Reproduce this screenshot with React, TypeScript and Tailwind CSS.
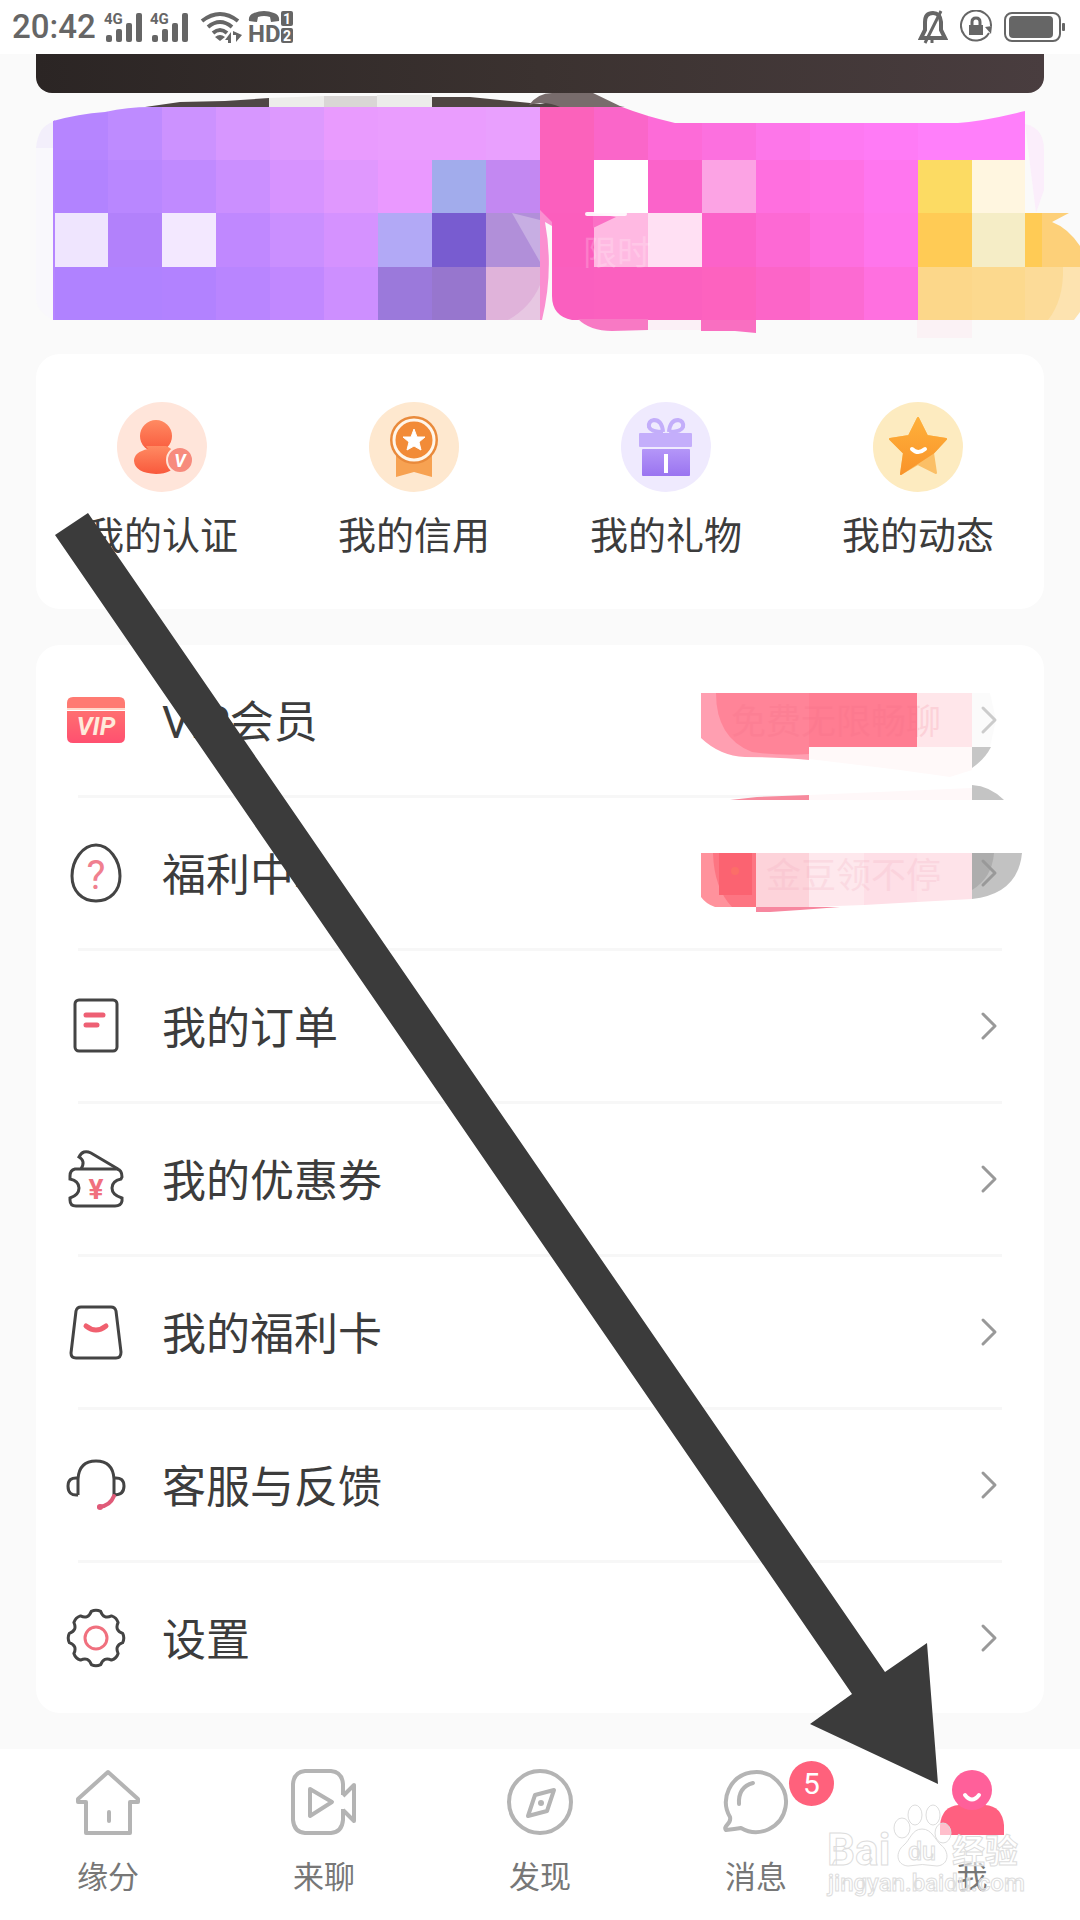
import type { ReactNode } from "react";

const purpleTiles = [
  ["#b685ff", "#be8bff", "#cc92ff", "#d797ff", "#dd99fe", "#e99bfe", "#ea9dfe", "#ea9dfe", "#e9a0fe"],
  ["#b283ff", "#b987ff", "#c08aff", "#cb8fff", "#d793ff", "#e098fe", "#ea99ff", "#a2acec", "#c388f2"],
  ["#efe5fe", "#b281fb", "#f3e8ff", "#c088ff", "#ca8fff", "#d592ff", "#b2a9f6", "#785cd0", "#b18fd9"],
  ["#b082ff", "#b082ff", "#b282ff", "#b985ff", "#c188ff", "#cd8fff", "#9b79db", "#9776ce", "#e0b3da"],
];

const pinkTiles = [
  ["#fb62bb", "#fa66c9", "#fd6bd8", "#fc70df", "#fd76e9", "#fe79f2", "#ff7bf6", "#ff7ffa", "#ff7ffa"],
  ["#fb5fbe", "#ffffff", "#fb63ca", "#fca3e4", "#ff6fdf", "#ff71e4", "#ff76ef", "#fcdb63", "#fff6e0"],
  ["#fb5ebd", "#ffb9e2", "#ffe0f3", "#fc62c9", "#fd69d4", "#fe6fe0", "#ff75ec", "#ffcb55", "#f5edc6"],
  ["#fa5fbf", "#fb60bf", "#fb60bf", "#fd62bf", "#fc65c8", "#fc6ad2", "#ff70e0", "#fcd78a", "#fcd98e"],
];

const rowY = [107, 160, 213, 267, 320];

function Tiles(props: { tiles: string[][]; x: number }) {
  return (
    <g shapeRendering="crispEdges">
      {props.tiles.map((row, r) =>
        row.map((fill, c) => (
          <rect
            key={`${r}-${c}`}
            x={props.x + c * 54}
            y={r === 0 ? 93 : rowY[r]}
            width={54}
            height={rowY[r + 1] - (r === 0 ? 93 : rowY[r])}
            fill={fill}
          />
        ))
      )}
    </g>
  );
}

function Banner() {
  return (
    <svg viewBox="0 93 1080 261" className="block w-full" aria-hidden="true">
      <defs>
        <clipPath id="purple-edge">
          <path d="M53 121Q78 114 105 112Q128 107 150 107H540V320H53Z" />
        </clipPath>
        <clipPath id="pink-edge">
          <path d="M540 107H622Q645 116 675 123H958Q985 121 1025 111V320H572Q552 316 552 296V222L540 210Z" />
        </clipPath>
      </defs>
      <path d="M36 148Q38 126 53 122V148Z" fill="#f3effb" />
      <path d="M36 148H53V320Q38 312 36 300Z" fill="#f9f8fc" />
      <path d="M1025 124Q1044 128 1044 150V190L1036 213Z" fill="#fbeefb" />
      <path d="M145 107L180 102L225 101L269 98V107Z" fill="#4f4746" />
      <path d="M269 98L324 96V107H269Z" fill="#ececea" />
      <path d="M324 96H377V107H324Z" fill="#d9d6d5" />
      <path d="M377 95H432V107H377Z" fill="#ececea" />
      <path d="M432 97L470 97L510 101L540 104L560 100L625 107H432Z" fill="#4f4643" />
      <path d="M529 105Q538 93 552 93H593L622 107H560Q545 100 529 105Z" fill="#786c6c" />
      <g clipPath="url(#purple-edge)">
        <Tiles tiles={purpleTiles} x={54} />
        <rect x="52" y="107" width="3" height="213" fill="#b685ff" />
        <path d="M512 213L540 220V262Z" fill="#c7aee3" />
        <path d="M540 285V320H508Q530 308 540 285Z" fill="#e7c7e2" />
      </g>
      <path d="M540 200L552 208V226L545 222Q554 270 542 320H540Z" fill="#fa8fd0" />
      <g clipPath="url(#pink-edge)">
        <Tiles tiles={pinkTiles} x={540} />
        <path d="M593 228L616 217L593 213Z" fill="#fb6fc5" />
      </g>
      <rect x="585" y="212" width="42" height="4" rx="2" fill="#ffffff" opacity="0.9" />
      <text x="583" y="265" fontSize="34" fill="#ffffff" opacity="0.2">
        限时
      </text>
      <path d="M1025 213H1069L1052 222Q1068 228 1080 246V267H1025Z" fill="#fdd079" />
      <path d="M1025 213H1042V267H1025Z" fill="#ffcb55" />
      <path d="M1025 267H1080V312L1074 320H1025Z" fill="#fde3b0" />
      <path d="M1025 267H1063Q1064 300 1048 320H1025Z" fill="#fcdb98" />
      <path d="M578 319Q590 331 612 331L648 330V319Z" fill="#f879c4" />
      <path d="M701 320H756V333L735 331H701Z" fill="#f96fc1" />
      <path d="M648 320H701V330H648Z" fill="#fbf0f6" />
      <path d="M917 320H972V338H917Z" fill="#fbf2f5" />
    </svg>
  );
}

function SignalIcon() {
  return (
    <svg viewBox="0 0 38 32" className="h-8 w-[38px] overflow-visible" fill="#666666">
      <text x="0" y="13" fontSize="15" className="font-[Roboto] font-bold">
        4G
      </text>
      <rect x="2" y="24" width="6" height="7" rx="2" />
      <rect x="12" y="18" width="6" height="13" rx="2" />
      <rect x="22" y="12" width="6" height="19" rx="2" />
      <rect x="32" y="2" width="6" height="29" rx="2" />
    </svg>
  );
}

function StatusBar() {
  return (
    <header className="flex h-[54px] items-center justify-between bg-white pl-3 pr-3.5">
      <div className="flex items-center gap-2">
        <span className="font-[Roboto] text-[33px] leading-10 font-medium text-[#666666]">20:42</span>
        <SignalIcon />
        <SignalIcon />
        <svg viewBox="0 0 44 32" className="ml-1 h-8 w-11" fill="none" stroke="#666666" strokeWidth="4">
          <path d="M2 10Q20 -4 38 10" />
          <path d="M8 16Q20 6 32 16" />
          <path d="M13 22Q20 16 27 22" />
          <path d="M15 26Q20 22 25 26L20 30Z" fill="#666666" stroke="none" />
          <path d="M25 29L31 21V32H28V29ZM33 20L42 24L36 31V24H33Z" fill="#666666" stroke="none" />
        </svg>
        <svg viewBox="0 0 46 34" className="-ml-1 h-[34px] w-[46px] overflow-visible" fill="#666666">
          <path d="M1 11Q0 5 6 3Q16 -1 26 3Q32 5 31 11L23 12L22 7Q16 5 10 7L9 12Z" />
          <text x="0" y="32" fontSize="24" className="font-[Roboto] font-bold">
            HD
          </text>
          <rect x="33" y="1" width="12" height="15" rx="2" />
          <rect x="33" y="18" width="12" height="15" rx="2" />
          <text x="39" y="14" fontSize="14" textAnchor="middle" fill="#ffffff" className="font-[Roboto] font-bold">
            1
          </text>
          <text x="39" y="31" fontSize="14" textAnchor="middle" fill="#ffffff" className="font-[Roboto] font-bold">
            2
          </text>
        </svg>
      </div>
      <div className="flex items-center gap-3">
        <svg viewBox="0 0 30 34" className="h-[34px] w-[30px]" fill="none" stroke="#666666" strokeWidth="4">
          <path d="M3 28H27L23 20V12Q22 3 15 3Q7 3 7 12V20Z" />
          <path d="M23 1L7 33M14 29V33" strokeWidth="3" />
        </svg>
        <svg viewBox="0 0 32 34" className="h-[34px] w-8" fill="none" stroke="#666666" strokeWidth="2">
          <path d="M29 23A15 15 0 1 1 31 16" />
          <rect x="9" y="15" width="14" height="10" fill="#666666" stroke="none" />
          <path d="M12 15V12Q12 8 16 8Q20 8 20 12V15" strokeWidth="3" />
          <path d="M25 17L32 16L31 24Z" fill="#666666" stroke="none" />
        </svg>
        <svg viewBox="0 0 62 34" className="h-[34px] w-[62px]" fill="#666666">
          <rect x="1" y="3" width="55" height="28" rx="7" fill="none" stroke="#666666" strokeWidth="2" />
          <rect x="5" y="6" width="44" height="22" rx="4" />
          <rect x="58" y="13" width="3" height="8" rx="1" />
        </svg>
      </div>
    </header>
  );
}

const shortcuts: { label: string; icon: ReactNode }[] = [
  {
    label: "我的认证",
    icon: (
      <>
        <circle cx="45" cy="45" r="45" fill="#ffe5da" />
        <circle cx="39" cy="34" r="16" fill="url(#orange)" />
        <path d="M29 44H49Q62 50 60 60Q56 72 39 72Q18 71 17 59Q17 50 31 47Z" fill="url(#orange)" />
        <circle cx="63" cy="58" r="13" fill="#f78b7d" stroke="#ffe5da" strokeWidth="2" />
        <text x="63" y="65" fontSize="18" textAnchor="middle" fill="#ffffff" className="font-[Roboto] font-bold italic">
          V
        </text>
      </>
    ),
  },
  {
    label: "我的信用",
    icon: (
      <>
        <circle cx="45" cy="45" r="45" fill="#fee8cf" />
        <path d="M27 52H63V75L45 70L27 75Z" fill="#f7a252" />
        <circle cx="45" cy="38" r="24" fill="#e98a3b" />
        <circle cx="45" cy="38" r="20" fill="#f28b37" stroke="#fff6ea" strokeWidth="3" />
        <path
          d="M45 27L48 35L56 35L50 40L52 48L45 44L38 48L40 40L34 35L42 35Z"
          fill="#ffffff"
          stroke="#ffffff"
          strokeLinejoin="round"
        />
      </>
    ),
  },
  {
    label: "我的礼物",
    icon: (
      <>
        <circle cx="45" cy="45" r="45" fill="#efeafe" />
        <path
          d="M42 30Q41 18 33 18Q27 19 28 25Q30 30 42 30M48 30Q49 18 57 18Q63 19 62 25Q60 30 48 30"
          fill="none"
          stroke="#c3aefa"
          strokeWidth="4"
        />
        <rect x="18" y="31" width="53" height="14" rx="1" fill="#c4aefb" />
        <rect x="21" y="47" width="48" height="27" rx="1" fill="url(#violet)" />
        <path d="M45 52V71" stroke="#ffffff" strokeWidth="4" />
      </>
    ),
  },
  {
    label: "我的动态",
    icon: (
      <>
        <circle cx="45" cy="45" r="45" fill="#fdebc0" />
        <path
          d="M45 16L54 34L73 37L60 51L63 71L45 62L28 72L31 51L17 37L36 34Z"
          fill="#fbbf66"
          stroke="#fbbf66"
          strokeWidth="2"
          strokeLinejoin="round"
        />
        <path
          d="M45 16L54 34L73 37L60 51L28 72L31 51L17 37L36 34Z"
          fill="url(#amber)"
          stroke="url(#amber)"
          strokeWidth="2"
          strokeLinejoin="round"
        />
        <path d="M39 47Q45 53 52 47" fill="none" stroke="#ffffff" strokeWidth="4" strokeLinecap="round" />
      </>
    ),
  },
];

// Eight rounded teeth joined by shallow notches
function gearPath() {
  const at = (radius: number, deg: number) => {
    const a = (deg * Math.PI) / 180;
    return `${(30 + radius * Math.cos(a)).toFixed(1)} ${(30 + radius * Math.sin(a)).toFixed(1)}`;
  };
  let d = `M${at(27, -100)}`;
  for (let k = 0; k < 8; k++) {
    const mid = -90 + k * 45;
    d += `Q${at(29, mid)} ${at(27, mid + 10)}Q${at(20, mid + 22)} ${at(27, mid + 35)}`;
  }
  return d + "Z";
}

const menu: { label: string; icon: ReactNode }[] = [
  {
    label: "VIP会员",
    icon: (
      <>
        <path d="M1 18V13Q1 7 7 7H53Q59 7 59 13V18Z" fill="#ff7a72" stroke="none" />
        <path d="M1 21H59V47Q59 53 53 53H7Q1 53 1 47Z" fill="url(#rose)" stroke="none" />
        <path d="M1 19H59" stroke="#ffd9cc" strokeWidth="2" />
        <text x="30" y="45" fontSize="25" textAnchor="middle" fill="#ffeadb" stroke="none" className="font-[Roboto] font-bold italic">
          VIP
        </text>
      </>
    ),
  },
  {
    label: "福利中心",
    icon: (
      <>
        <path d="M30 2C43 2 54 17 54 33C54 48 44 58 30 58C16 58 6 48 6 33C6 17 17 2 30 2Z" />
        <text x="30" y="46" fontSize="40" textAnchor="middle" fill="#f0808f" stroke="none" className="font-[Roboto] font-normal">
          ?
        </text>
      </>
    ),
  },
  {
    label: "我的订单",
    icon: (
      <>
        <rect x="9" y="4" width="42" height="51" rx="4" />
        <path d="M20 19H37M20 29H31" stroke="#ee6074" strokeWidth="5" strokeLinecap="round" />
      </>
    ),
  },
  {
    label: "我的优惠券",
    icon: (
      <>
        <path d="M9 20H51Q56 21 56 28L55 30Q46 32 46 39Q46 46 56 49V52Q55 57 49 57H10Q4 57 4 51V49Q13 46 13 39Q13 32 4 30V27Q4 21 9 20Z" />
        <path d="M15 20Q20 12 13 8Q17 0 25 4L52 20" />
        <text x="30" y="50" fontSize="28" textAnchor="middle" fill="#f0707e" stroke="none" className="font-[Roboto] font-bold">
          ¥
        </text>
      </>
    ),
  },
  {
    label: "我的福利卡",
    icon: (
      <>
        <path d="M15 5H45Q49 5 50 9L55 50Q55 56 50 56H10Q5 56 5 51L10 9Q11 5 15 5Z" />
        <path d="M20 24Q30 32 40 24" stroke="#f0606f" strokeWidth="5" strokeLinecap="round" />
      </>
    ),
  },
  {
    label: "客服与反馈",
    icon: (
      <>
        <path d="M12 40V24Q13 6 30 6Q47 6 48 24V40Q58 40 58 31Q58 22 48 23" />
        <path d="M12 40Q2 41 2 31Q2 22 12 23" />
        <path d="M48 41Q44 51 33 52" stroke="#e05a78" strokeWidth="4" strokeLinecap="round" />
        <circle cx="34" cy="52" r="3" fill="#e05a78" stroke="none" />
      </>
    ),
  },
  {
    label: "设置",
    icon: (
      <>
        <path d={gearPath()} strokeLinejoin="round" />
        <circle cx="30" cy="30" r="11" stroke="#f0707e" />
      </>
    ),
  },
];

// Rubbed-out promo tags on the first two rows
function PromoMosaic() {
  return (
    <svg
      viewBox="701 645 343 306"
      className="pointer-events-none absolute right-0 top-0 h-[306px] w-[343px]"
      aria-hidden="true"
    >
      <path d="M809 794H1002V799H809Z" fill="#ffffff" />
      <path d="M701 693H809V760Q780 757 745 757Q720 756 701 738Z" fill="#ff9fb1" />
      <path d="M716 693H809V754Q780 756 752 752Q716 738 716 693Z" fill="#ff8498" />
      <path d="M809 693H917V747H809Z" fill="#ff7d92" />
      <path d="M917 693H972V747H917Z" fill="#ffe6ea" />
      <path d="M972 693H990L996 720L990 747H972Z" fill="#fbfbfb" />
      <path d="M809 747H972V770L950 777L900 770L809 759Z" fill="#fff9f9" />
      <path d="M972 747H991Q985 759 972 768Z" fill="#c6c6c6" />
      <text x="731" y="734" fontSize="35" fill="#f06a82" opacity="0.16">
        免费无限畅聊
      </text>
      <path d="M730 800L757 797L809 795V800Z" fill="#f78a9d" />
      <path d="M809 795L972 788V800H809Z" fill="#fff8f9" />
      <path d="M972 785Q990 786 1004 800H972Z" fill="#c4c4c4" />
      <path d="M701 853H756V907H715Q706 904 701 897Z" fill="#ff929c" />
      <path d="M713 853H756V907H732Q714 888 713 853Z" fill="#fd7582" />
      <rect x="719" y="853" width="33" height="42" fill="#fb6371" />
      <circle cx="735" cy="871" r="4" fill="#fb6e68" />
      <rect x="756" y="853" width="53" height="54" fill="#fdd3da" />
      <path d="M809 853H864V905L809 907Z" fill="#fee8ed" />
      <path d="M864 853H917V902L864 905Z" fill="#fedfe7" />
      <path d="M917 853H972V899L917 902Z" fill="#fee3e9" />
      <path d="M756 907H840L800 910L770 912H756Z" fill="#f7879f" />
      <path d="M972 853H1022Q1018 894 972 899Z" fill="#c2c2c2" />
      <path d="M972 853H994Q992 878 972 890Z" fill="#adadad" />
      <text x="766" y="888" fontSize="35" fill="#f0a5b8" opacity="0.2">
        金豆领不停
      </text>
    </svg>
  );
}

const tabs: { label: string; icon: ReactNode; badge?: number }[] = [
  {
    label: "缘分",
    icon: (
      <>
        <path d="M33 3L63 30V33H55V64H11V33H3V30Z" />
        <path d="M34 43V52" strokeLinecap="round" />
      </>
    ),
  },
  {
    label: "来聊",
    icon: (
      <>
        <path d="M52 26V15Q51 3 40 2H14Q3 3 2 15V51Q3 63 14 64H40Q51 63 52 51V40" />
        <path d="M52 27L63 16V52L52 41" />
        <path d="M19 20L41 33L19 47Z" />
      </>
    ),
  },
  {
    label: "发现",
    icon: (
      <>
        <circle cx="33" cy="33" r="31" />
        <path d="M28 26L47 21L40 42L21 47Z" />
        <circle cx="34" cy="34" r="3" fill="#b4b4b4" stroke="none" />
      </>
    ),
  },
  {
    label: "消息",
    badge: 5,
    icon: (
      <>
        <path d="M7 48A30 30 0 1 1 18 59Q12 60 3 61Q1 59 4 56Q8 52 7 48Z" />
        <path d="M16 35Q15 18 30 14" strokeLinecap="round" />
      </>
    ),
  },
  {
    label: "我",
    icon: (
      <g stroke="none">
        <path d="M1 66V56Q3 37 20 36H46Q63 37 65 56V66Z" fill="#ff6080" />
        <circle cx="33" cy="21" r="20" fill="#ff609a" />
        <path d="M26 26Q33 35 40 26" fill="none" stroke="#ffffff" strokeWidth="4" strokeLinecap="round" />
      </g>
    ),
  },
];

function Gradient(props: { id: string; from: string; to: string }) {
  return (
    <linearGradient id={props.id} x1="0" y1="0" x2="0" y2="1">
      <stop offset="0" stopColor={props.from} />
      <stop offset="1" stopColor={props.to} />
    </linearGradient>
  );
}

function Watermark() {
  return (
    <g fill="#ffffff" fillOpacity="0.6" stroke="#dddddd" strokeWidth="1" className="font-[Roboto]">
      <text x="827" y="1865" fontSize="44" className="font-bold">
        Bai
      </text>
      <ellipse cx="902" cy="1828" rx="8" ry="10" />
      <ellipse cx="915" cy="1815" rx="7" ry="10" />
      <ellipse cx="933" cy="1815" rx="7" ry="10" />
      <ellipse cx="943" cy="1833" rx="8" ry="10" />
      <path d="M922 1829C932 1829 935 1840 941 1845C950 1852 949 1865 937 1866Q922 1863 908 1866C896 1865 895 1852 904 1845C910 1840 912 1829 922 1829Z" />
      <text x="922" y="1860" fontSize="25" textAnchor="middle" className="font-medium">
        du
      </text>
      <text x="952" y="1863" fontSize="33" className="font-['Noto_Sans_CJK_SC'] font-bold">
        经验
      </text>
      <text x="828" y="1891" fontSize="24" className="font-medium">
        jingyan.baidu.com
      </text>
    </g>
  );
}

export default function App() {
  return (
    <div className="relative flex min-h-screen flex-col bg-[#fafafa] font-['Roboto','Noto_Sans_CJK_SC',sans-serif] text-[#3c3c3c]">
      <svg className="absolute h-0 w-0" aria-hidden="true">
        <defs>
          <Gradient id="orange" from="#ff8a62" to="#f9593c" />
          <Gradient id="violet" from="#b496f8" to="#9a74f0" />
          <Gradient id="amber" from="#ffb03a" to="#f9942a" />
          <Gradient id="rose" from="#ff6f70" to="#ff5070" />
        </defs>
      </svg>

      <StatusBar />

      <main className="flex-1">
        <div className="mx-9 h-[39px] rounded-b-2xl bg-linear-to-r from-[#2b2524] via-[#3b3230] to-[#493d3f]" />
        <Banner />

        <section className="mx-9 grid h-[255px] grid-cols-4 rounded-3xl bg-white pt-12">
          {shortcuts.map((item) => (
            <a key={item.label} href="#" className="flex flex-col items-center gap-4">
              <svg viewBox="0 0 90 90" className="size-[90px]">
                {item.icon}
              </svg>
              <span className="text-[38px] leading-[56px]">{item.label}</span>
            </a>
          ))}
        </section>

        <section className="relative mx-9 my-9 rounded-3xl bg-white">
          <ul>
            {menu.map((item, i) => (
              <li key={item.label}>
                <a href="#" className="flex h-[150px] items-center pl-[30px] pr-[42px]">
                  <svg viewBox="0 0 60 60" className="size-[60px]" fill="none" stroke="#444444" strokeWidth="3">
                    {item.icon}
                  </svg>
                  <span className="ml-9 flex-1 pt-1.5 text-[44px] leading-[64px]">{item.label}</span>
                  <svg
                    viewBox="0 0 24 36"
                    className={`relative z-10 h-9 w-6 ${i === 0 ? "text-[#cccccc]" : "text-[#999999]"}`}
                    fill="none"
                    stroke="currentColor"
                    strokeWidth="3"
                    strokeLinecap="round"
                    strokeLinejoin="round"
                  >
                    <path d="M5 6L17 18L5 30" />
                  </svg>
                </a>
                {i < menu.length - 1 && <div className="mx-[42px] h-[3px] bg-[#f7f7f7]" />}
              </li>
            ))}
          </ul>
          <PromoMosaic />
        </section>
      </main>

      <nav className="grid h-[171px] grid-cols-5 bg-white pt-5">
        {tabs.map((tab) => (
          <a key={tab.label} href="#" className="flex flex-col items-center gap-5 text-[#777777]">
            <span className="relative">
              <svg
                viewBox="0 0 66 66"
                className="size-[66px] overflow-visible"
                fill="none"
                stroke="#b4b4b4"
                strokeWidth="4"
                strokeLinejoin="round"
              >
                {tab.icon}
              </svg>
              {tab.badge && (
                <span className="absolute -top-2 left-full flex size-[45px] items-center justify-center rounded-full bg-[#ff617c] font-[Roboto] text-[30px] leading-none text-white">
                  {tab.badge}
                </span>
              )}
            </span>
            <span className="text-[31px] leading-[46px]">{tab.label}</span>
          </a>
        ))}
      </nav>

      <svg viewBox="0 0 1080 1920" className="pointer-events-none absolute left-0 top-0 z-20 w-full" aria-hidden="true">
        <Watermark />
        <path d="M55 535L88 513L885 1672L927 1643L938 1784L810 1724L852 1694Z" fill="#3b3b3b" />
      </svg>
    </div>
  );
}
